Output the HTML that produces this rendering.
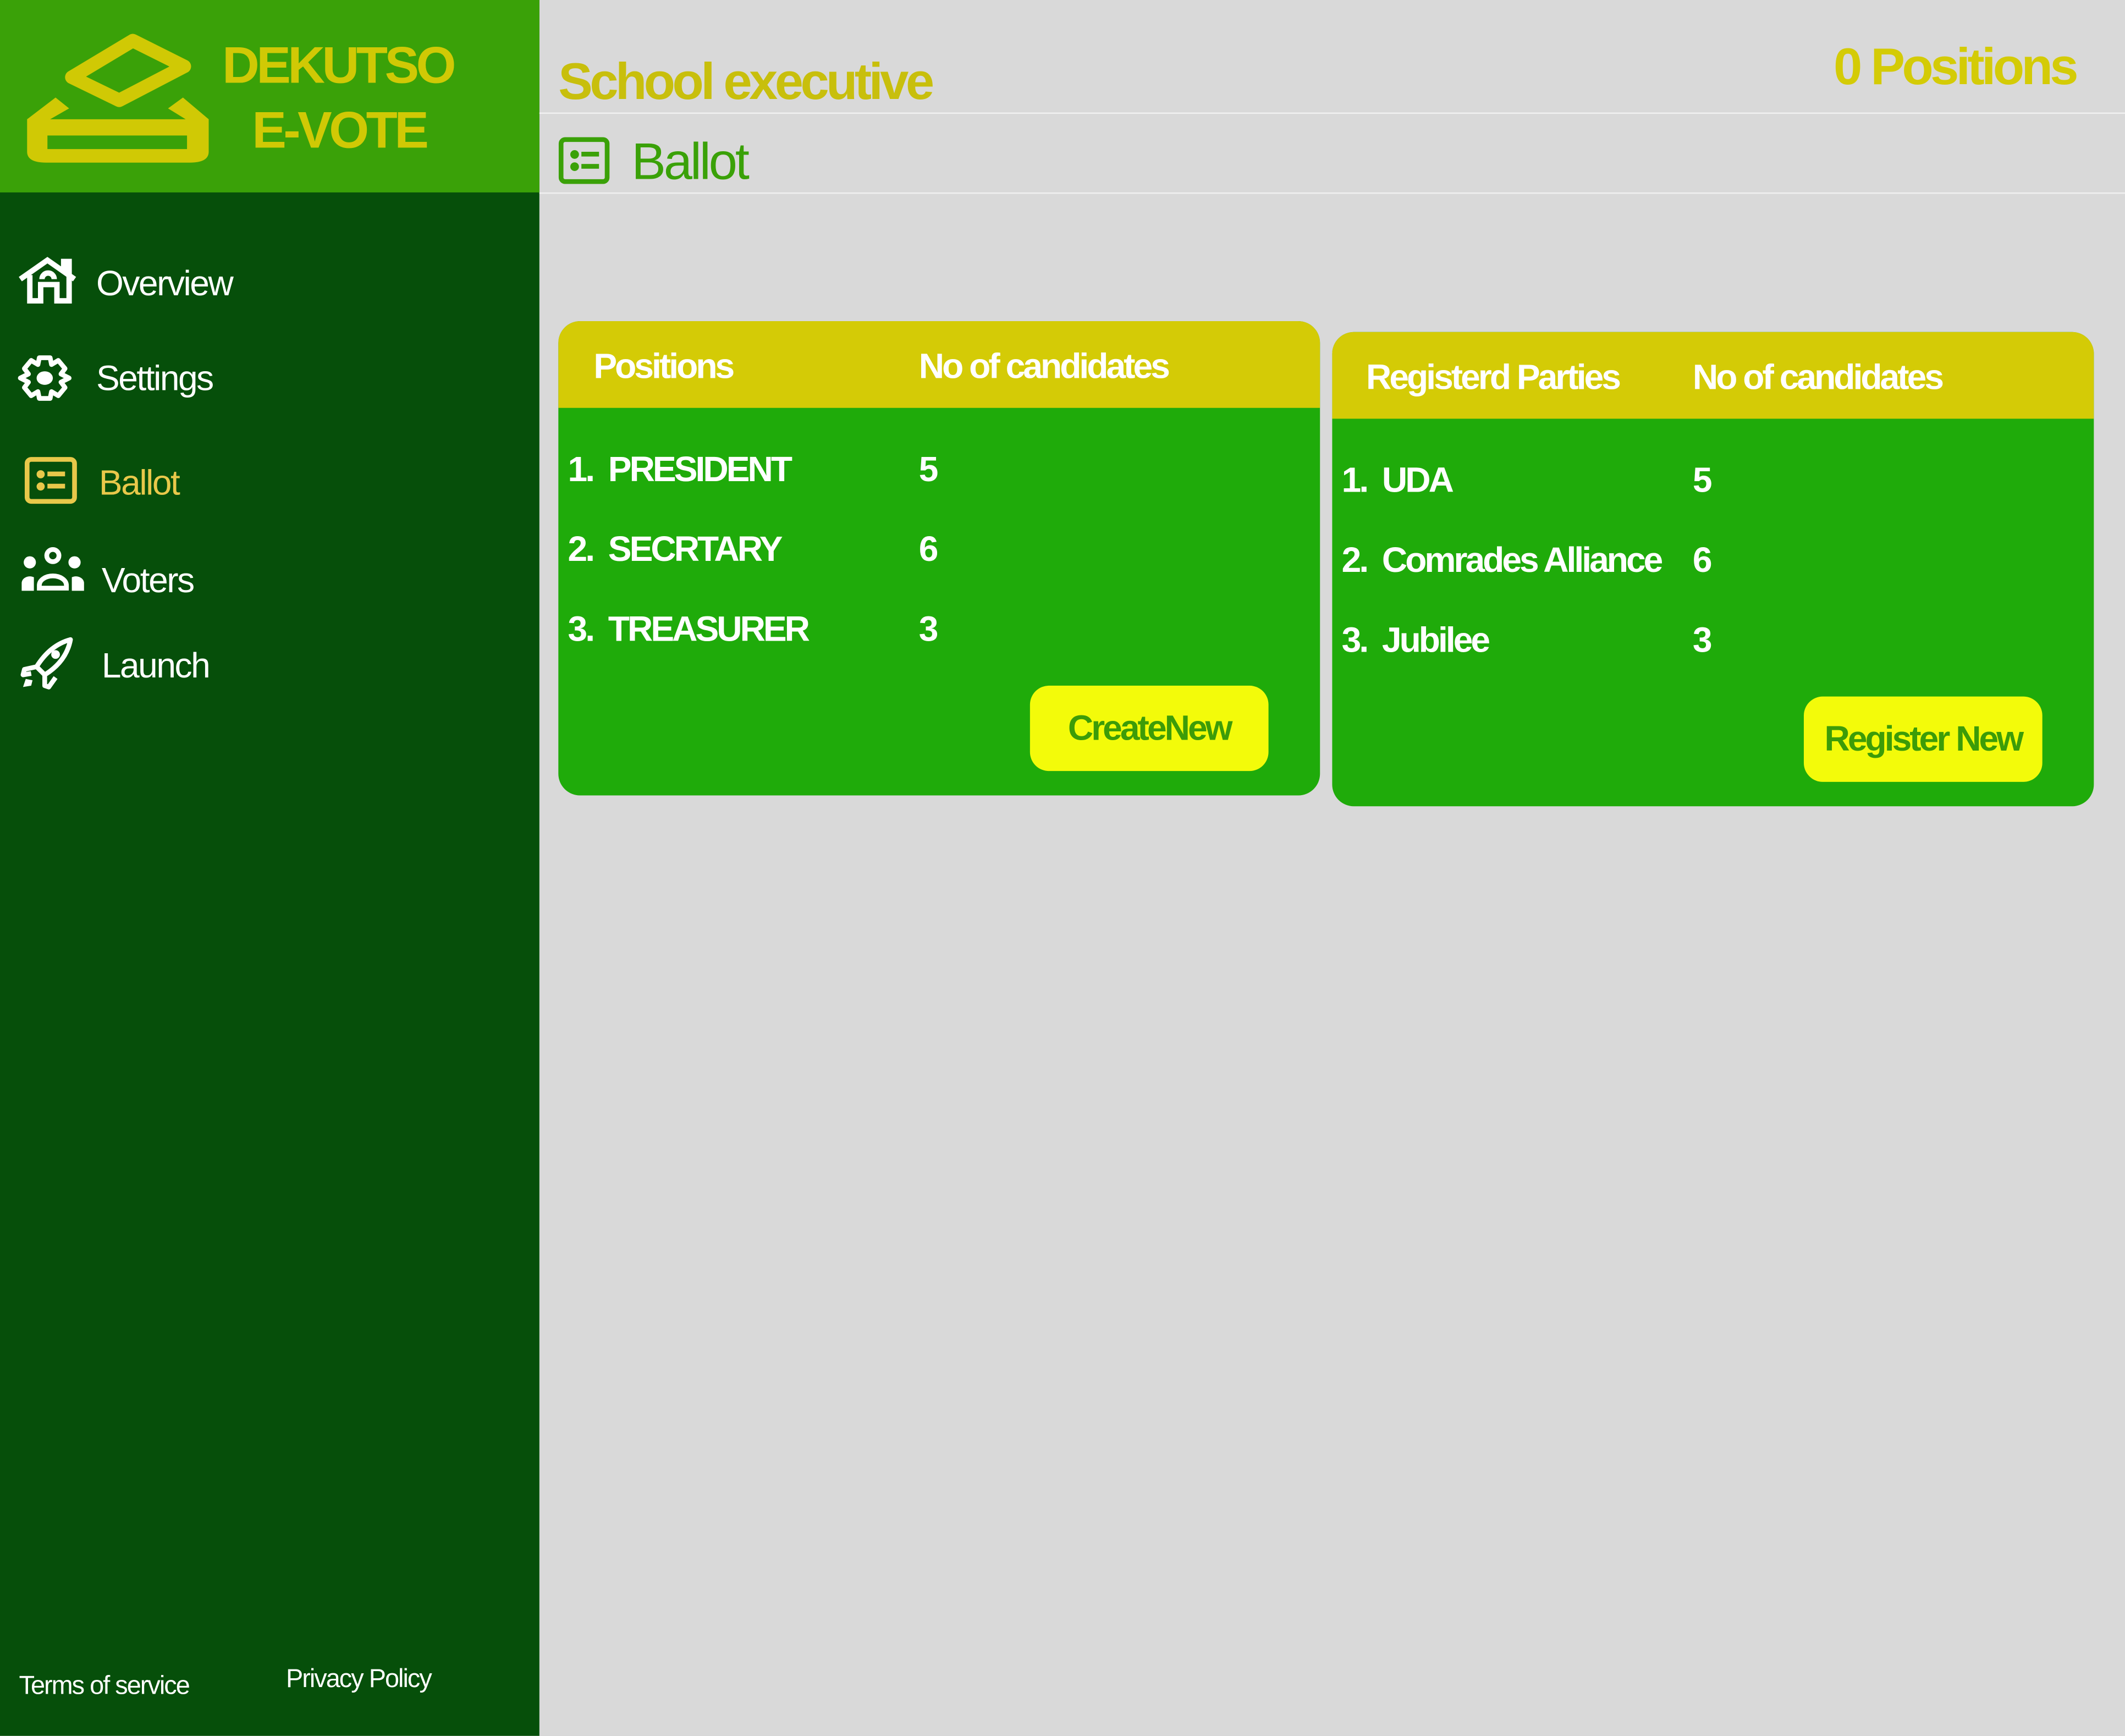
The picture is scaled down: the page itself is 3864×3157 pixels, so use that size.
<!DOCTYPE html>
<html><head><meta charset="utf-8"><style>
html,body{margin:0;padding:0;background:#d9d9d9;overflow:hidden}
#w{position:absolute;left:0;top:0;width:1568px;height:1281px;transform:scale(2.46429);transform-origin:0 0;background:#d9d9d9;font-family:"Liberation Sans",sans-serif}
.a{position:absolute;line-height:1;white-space:nowrap}
.b{font-weight:bold;letter-spacing:-1.6px}
.n{letter-spacing:-1px}
</style></head><body><div id="w">
<!-- sidebar -->
<div class="a" style="left:0;top:0;width:398px;height:1281px;background:#064f0a"></div>
<div class="a" style="left:0;top:0;width:398px;height:142px;background:#3aa108"></div>
<svg class="a" style="left:0;top:0" width="160" height="130" viewBox="0 0 160 130">
<path d="M98 30 L136 49 L88 74 L53 57 Z" fill="none" stroke="#d0c905" stroke-width="10" stroke-linejoin="round"/>
<path d="M20 88 L41 72 L51 80 L37 88 H137 L124 80 L135 72 L154 88 V112 Q154 120 140 120 H34 Q20 120 20 112 Z" fill="#d0c905"/>
<rect x="35" y="100" width="103" height="10" fill="#3aa108"/>
</svg>
<div class="a b" style="left:164px;top:30px;font-size:38px;color:#d0c905;letter-spacing:-2.2px">DEKUTSO</div>
<div class="a b" style="left:186px;top:78px;font-size:38px;color:#d0c905;letter-spacing:-2.2px">E-VOTE</div>

<svg class="a" style="left:13px;top:188px" width="46" height="36" viewBox="0 0 46 36"><path d="M2 18 L22 4 L42 18 M34 12 V5 H38 V34 H29 V22 H17 V34 H9 V15 M18 18 a4.5 4.5 0 0 1 9 0" fill="none" stroke="#fff" stroke-width="4"/></svg>
<div class="a n" style="left:71px;top:196px;font-size:26px;color:#fff">Overview</div>
<svg class="a" style="left:13px;top:261px" width="40" height="36" viewBox="0 0 40 36"><path d="M16 3 H24 L25 8 L30 5 L35 11 L32 15 L38 18 L32 21 L35 25 L30 31 L25 28 L24 33 H16 L15 28 L10 31 L5 25 L8 21 L2 18 L8 15 L5 11 L10 5 L15 8 Z" fill="none" stroke="#fff" stroke-width="3.5" stroke-linejoin="round"/><ellipse cx="20" cy="18" rx="6" ry="5" fill="#fff"/></svg>
<div class="a n" style="left:71px;top:266px;font-size:26px;color:#fff">Settings</div>
<svg class="a" style="left:18px;top:337px" width="40" height="36" viewBox="0 0 40 36"><rect x="2" y="2" width="35" height="31" rx="3" fill="none" stroke="#e8c84a" stroke-width="3.5"/><circle cx="12" cy="13" r="3" fill="#e8c84a"/><circle cx="12" cy="22" r="3" fill="#e8c84a"/><rect x="17" y="11" width="13" height="3.5" fill="#e8c84a"/><rect x="17" y="20" width="13" height="3.5" fill="#e8c84a"/></svg>
<div class="a n" style="left:73px;top:343px;font-size:26px;color:#e8c84a">Ballot</div>
<svg class="a" style="left:15px;top:403px" width="48" height="36" viewBox="0 0 48 36"><circle cx="24" cy="7" r="4.5" fill="none" stroke="#fff" stroke-width="3.5"/><circle cx="7" cy="12" r="4.5" fill="#fff"/><circle cx="40" cy="12" r="4.5" fill="#fff"/><path d="M14 31 V29 a10 7 0 0 1 20 0 V31 Z" fill="none" stroke="#fff" stroke-width="3.5"/><path d="M1 33 V27 a6 5 0 0 1 9 -4 V33 Z M47 33 V27 a6 5 0 0 0 -9 -4 V33 Z" fill="#fff"/></svg>
<div class="a n" style="left:75px;top:415px;font-size:26px;color:#fff">Voters</div>
<svg class="a" style="left:15px;top:468px" width="40" height="42" viewBox="0 0 40 42"><path d="M12 24 Q22 8 37 4 Q34 20 18 30 Z M12 24 L3 26 L2 30 L8 29 M18 30 L18 38 L21 39 L26 32" fill="none" stroke="#fff" stroke-width="3.5" stroke-linejoin="round"/><circle cx="26" cy="15" r="3.2" fill="#fff"/><path d="M2 39 L4 33 L9 34 L8 38 Z" fill="#fff"/></svg>
<div class="a n" style="left:75px;top:478px;font-size:26px;color:#fff">Launch</div>
<div class="a" style="left:14px;top:1235px;font-size:19px;color:#fff;letter-spacing:-0.8px">Terms of service</div>
<div class="a" style="left:211px;top:1230px;font-size:19px;color:#fff;letter-spacing:-0.8px">Privacy Policy</div>

<!-- main header -->
<div class="a b" style="left:412px;top:42px;font-size:38px;color:#c8bf0c;letter-spacing:-2.2px">School executive</div>
<div class="a b" style="left:1353px;top:31px;font-size:38px;color:#d4cb06;letter-spacing:-2.2px">0 Positions</div>
<div class="a" style="left:398px;top:83px;width:1170px;height:1px;background:#f0f0f0"></div>
<svg class="a" style="left:412px;top:101px" width="40" height="36" viewBox="0 0 40 36"><rect x="2" y="2" width="34" height="31" rx="3" fill="none" stroke="#3aa108" stroke-width="3.5"/><circle cx="12" cy="13" r="3.2" fill="#3aa108"/><circle cx="12" cy="22" r="3.2" fill="#3aa108"/><rect x="17" y="11" width="13" height="3.5" fill="#3aa108"/><rect x="17" y="20" width="13" height="3.5" fill="#3aa108"/></svg>
<div class="a" style="left:466px;top:101px;font-size:38px;color:#3aa108;letter-spacing:-1.6px">Ballot</div>
<div class="a" style="left:398px;top:142px;width:1170px;height:1px;background:#f0f0f0"></div>

<!-- card 1 -->
<div class="a" style="left:412px;top:237px;width:562px;height:350px;border-radius:16px;overflow:hidden;background:#1fab0a">
<div style="height:64px;background:#d4cb06"></div></div>
<div class="a b" style="left:438px;top:257px;font-size:26px;color:#fff">Positions</div>
<div class="a b" style="left:678px;top:257px;font-size:26px;color:#fff">No of candidates</div>
<div class="a b" style="left:419px;top:333px;font-size:26px;color:#fff">1.&nbsp; PRESIDENT</div>
<div class="a b" style="left:419px;top:392px;font-size:26px;color:#fff">2.&nbsp; SECRTARY</div>
<div class="a b" style="left:419px;top:451px;font-size:26px;color:#fff">3.&nbsp; TREASURER</div>
<div class="a b" style="left:678px;top:333px;font-size:26px;color:#fff">5</div>
<div class="a b" style="left:678px;top:392px;font-size:26px;color:#fff">6</div>
<div class="a b" style="left:678px;top:451px;font-size:26px;color:#fff">3</div>
<div class="a b" style="left:760px;top:506px;width:176px;height:63px;border-radius:14px;background:#f3fb0a;color:#3c9c08;font-size:26px;line-height:63px;text-align:center">CreateNew</div>

<!-- card 2 -->
<div class="a" style="left:983px;top:245px;width:562px;height:350px;border-radius:16px;overflow:hidden;background:#1fab0a">
<div style="height:64px;background:#d4cb06"></div></div>
<div class="a b" style="left:1008px;top:265px;font-size:26px;color:#fff">Registerd Parties</div>
<div class="a b" style="left:1249px;top:265px;font-size:26px;color:#fff">No of candidates</div>
<div class="a b" style="left:990px;top:341px;font-size:26px;color:#fff">1.&nbsp; UDA</div>
<div class="a b" style="left:990px;top:400px;font-size:26px;color:#fff">2.&nbsp; Comrades Alliance</div>
<div class="a b" style="left:990px;top:459px;font-size:26px;color:#fff">3.&nbsp; Jubilee</div>
<div class="a b" style="left:1249px;top:341px;font-size:26px;color:#fff">5</div>
<div class="a b" style="left:1249px;top:400px;font-size:26px;color:#fff">6</div>
<div class="a b" style="left:1249px;top:459px;font-size:26px;color:#fff">3</div>
<div class="a b" style="left:1331px;top:514px;width:176px;height:63px;border-radius:14px;background:#f3fb0a;color:#3c9c08;font-size:26px;line-height:63px;text-align:center">Register New</div>
</div></body></html>
